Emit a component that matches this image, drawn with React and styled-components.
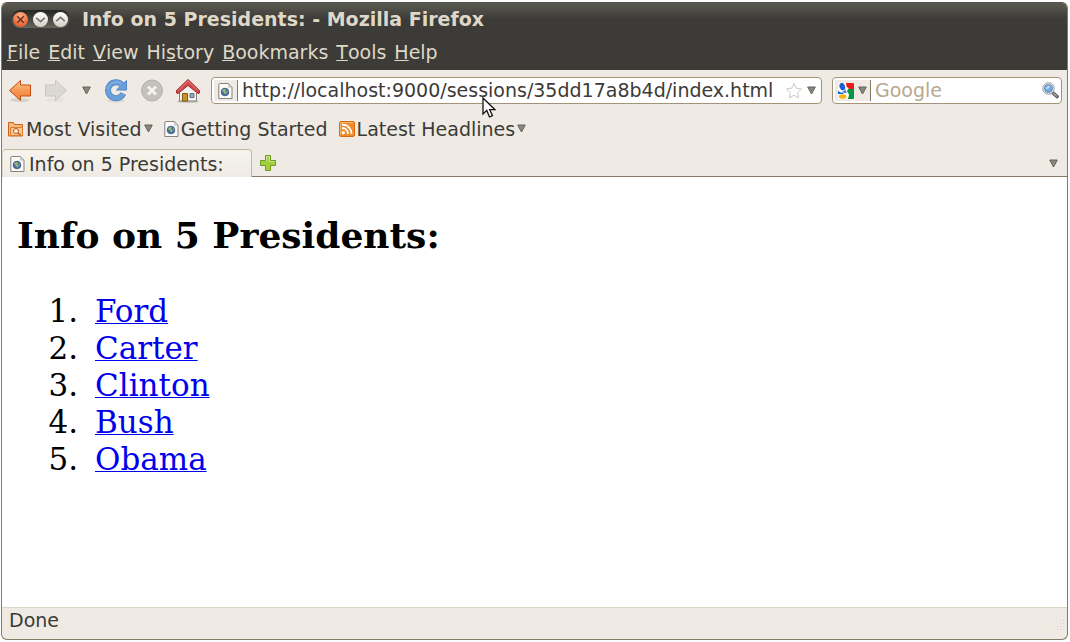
import React from "react";
import styled, { createGlobalStyle } from "styled-components";

const GlobalStyle = createGlobalStyle`
  * { box-sizing: border-box; }
  body { margin: 0; background: #fff; }
  button, input { font: inherit; color: inherit; border: 0; padding: 0; margin: 0; background: none; }
  button { display: flex; align-items: center; white-space: nowrap; }
  svg { display: block; flex: none; }
`;

const Desktop = styled.div`
  display: flex;
  min-height: 100vh;
  padding: 2px 2px 2px 1px;
`;

const Window = styled.div`
  position: relative;
  display: flex;
  flex-direction: column;
  flex: 1;
  min-width: 0;
  border: 1px solid #857a66;
  border-top-color: #55544c;
  border-radius: 6px;
  overflow: hidden;
  background: #efebe4;
  color: #3c3b37;
  font: 19px/24px "DejaVu Sans", sans-serif;
`;

const TitleBar = styled.header`
  display: flex;
  align-items: center;
  gap: 12px;
  height: 32px;
  padding: 0 9px;
  background: linear-gradient(#5b5a52, #3c3b37 50%);
  color: #dfd8c8;
  font-weight: bold;
`;

const WindowControls = styled.div`
  display: flex;
  align-items: center;
  gap: 5px;
  height: 18px;
  padding: 0 2px;
  border-radius: 9px;
  background: linear-gradient(#252521, #66655e);
`;

const ControlButton = styled.button`
  width: 15px;
  height: 15px;
  border-radius: 50%;
  justify-content: center;
  background: ${(p) =>
    p.$close
      ? "radial-gradient(circle at 50% 25%, #ffae89, #f0703e 60%, #dc5528)"
      : "linear-gradient(#ffffff, #d4d0c6)"};
`;

const MenuBar = styled.nav`
  display: flex;
  gap: 8px;
  height: 35px;
  padding: 5px 5px 0;
  background: #3c3b37;
  color: #dfd8c8;
`;

const MenuItem = styled.button`
  height: 24px;
`;

const NavBar = styled.div`
  display: flex;
  align-items: center;
  gap: 10px;
  padding: 7px 5px 6px;
`;

const NavButtons = styled.div`
  display: flex;
  align-items: center;
  gap: 12px;
  padding: 0 1px;
`;

const IconButton = styled.button`
  justify-content: center;
  width: ${(p) => p.$width || 24}px;
  height: 24px;
`;

const Field = styled.div`
  display: flex;
  align-items: center;
  flex: ${(p) => (p.$width ? `0 0 ${p.$width}px` : "1")};
  min-width: 0;
  height: 27px;
  padding: 0 2px;
  border: 1px solid #a39378;
  border-radius: 4px;
  background: #fff;
`;

const FieldButton = styled.button`
  justify-content: center;
  gap: 4px;
  height: 21px;
  width: ${(p) => p.$width}px;
  border-right: 1px solid #857a66;
  background: #efebe4;
`;

const TextInput = styled.input`
  flex: 1;
  min-width: 0;
  height: 24px;
  padding: 0 4px 2px;
  outline: 0;
  &::placeholder { color: #b8a88f; opacity: 1; }
`;

const BookmarksBar = styled.nav`
  display: flex;
  align-items: center;
  gap: 11px;
  height: 37px;
  padding: 0 6px;
`;

const Bookmark = styled.button`
  gap: 2px;
`;

const TabStrip = styled.div`
  display: flex;
  align-items: stretch;
  height: 30px;
  background: linear-gradient(#857a66, #857a66) bottom / 100% 1px no-repeat;
`;

const Tab = styled.button`
  gap: 4px;
  width: 250px;
  margin-top: 2px;
  padding: 0 7px;
  border: 1px solid #c3b89c;
  border-bottom: 0;
  border-left-color: #ddd5c4;
  border-radius: 4px 4px 0 0;
  background: linear-gradient(#f7f4ee, #efebe4);
`;

const TabActions = styled.div`
  display: flex;
  align-items: center;
  justify-content: space-between;
  flex: 1;
  padding: 2px 2px 0 4px;
`;

const Page = styled.main`
  flex: 1;
  padding: 0 15px;
  background: #fff;
  color: #000;
  font: 31px/37px "DejaVu Serif", serif;
`;

const Heading = styled.h1`
  margin: 36px 0;
  font-size: 36px;
  line-height: 44px;
`;

const PresidentList = styled.ol`
  margin: 0;
  padding-left: 71px;
`;

const President = styled.li`
  padding-left: 7px;
`;

const PageLink = styled.a`
  color: #0000ee;
  text-decoration: underline 1px;
`;

const StatusBar = styled.footer`
  display: flex;
  align-items: flex-end;
  justify-content: space-between;
  height: 32px;
  padding: 0 1px 7px 7px;
  border-top: 1px solid #dcd6ca;
`;

const Pointer = styled.svg`
  position: absolute;
  left: 480px;
  top: 94px;
  pointer-events: none;
`;

const Arrow = ({ size = 9 }) => (
  <svg width={size} height={size} viewBox="0 0 9 9">
    <path d="M.7 1h7.6L4.5 8z" fill="#8a877f" stroke="#65625b" strokeWidth="1" />
  </svg>
);

const PageIcon = () => (
  <svg width="15" height="16" viewBox="0 0 15 16">
    <path d="M1.500.5h9l3.500 3.500v11.500H.8V1z" fill="#fafaf8" stroke="#85837e" />
    <path d="M10.500.7V4.200H14z" fill="#dedcd7" stroke="#aaa8a3" strokeWidth=".6" />
    <circle cx="7" cy="9" r="3.800" fill="#4972a8" stroke="#2f4d79" strokeWidth=".8" />
    <path d="M4 7.500 6 6l2 .5-1 1.800 1.800 1-1.200 2.500-1.500-2zM9 6.500l1.500 1.800-1 1.200z" fill="#9cbd69" />
  </svg>
);

const DirectionIcon = ({ forward }) => {
  const id = forward ? "fwdFill" : "backFill";
  return (
    <svg width="24" height="24" viewBox="0 0 24 24">
      <defs>
        <linearGradient id={id} x1="0" y1="0" x2="0" y2="1">
          <stop offset="0" stopColor={forward ? "#e5e2dd" : "#ffc58c"} />
          <stop offset=".5" stopColor={forward ? "#d9d6d0" : "#f49a55"} />
          <stop offset="1" stopColor={forward ? "#e3dfd8" : "#f27a2c"} />
        </linearGradient>
      </defs>
      <ellipse cx="12" cy="21" rx="10" ry="2" fill="#000" opacity={forward ? ".03" : ".1"} />
      <path
        d="M1.500 11.500 12.500 1.500V6H22.500V17H12.500V21.500z"
        transform={forward ? "matrix(-1 0 0 1 24 0)" : undefined}
        fill={`url(#${id})`}
        stroke={forward ? "#c8c4be" : "#c54a12"}
        strokeLinejoin="round"
      />
    </svg>
  );
};

const ReloadIcon = () => (
  <svg width="24" height="24" viewBox="0 0 24 24">
    <ellipse cx="12" cy="21.500" rx="9" ry="2" fill="#000" opacity=".08" />
    <path d="M18.500 6.500A8 8 0 1 0 19.300 14.500" fill="none" stroke="#4f86c5" strokeWidth="6" />
    <path d="M22.500 1.500V11H12.500z" fill="#6a9fd9" stroke="#4f86c5" strokeLinejoin="round" />
    <path d="M18.500 6.500A8 8 0 1 0 19 15" fill="none" stroke="#6a9fd9" strokeWidth="4.500" />
    <path d="M3.500 10C5 4 12 1.500 17 4" fill="none" stroke="#8fb9e6" />
  </svg>
);

const StopIcon = () => (
  <svg width="24" height="24" viewBox="0 0 24 24">
    <circle cx="12" cy="11.500" r="10.500" fill="#c4c1bc" stroke="#b4b0aa" />
    <path d="m8 7.500 8 8m0-8-8 8" stroke="#f3f1ed" strokeWidth="3" />
  </svg>
);

const HomeIcon = () => (
  <svg width="24" height="24" viewBox="0 0 24 24">
    <ellipse cx="12" cy="22.500" rx="11" ry="1.300" fill="#000" opacity=".2" />
    <path d="M3.500 11 12 3.500 20.500 11V22H3.500z" fill="#f3f2ef" stroke="#85837e" />
    <path d="M6.500 14.500h5V22h-5z" fill="#c99627" stroke="#825b13" />
    <path d="M14 14.500h4v4h-4z" fill="#8daac8" stroke="#6e7176" />
    <path d="M12 .5 23.500 11.500V14L22 14.500 12 6.500 2 14.500.5 14V11.500z" fill="#d04a4c" stroke="#a32a2c" strokeLinejoin="round" />
    <path d="m2 11.500 10-9.500L22 11.500" fill="none" stroke="#e47f7f" />
  </svg>
);

const StarIcon = () => (
  <svg width="18" height="17" viewBox="0 0 18 17">
    <path d="m9 1.300 2.300 4.900 5.200.7-3.800 3.700 1 5.200L9 13.300l-4.700 2.500 1-5.200L1.500 6.900l5.200-.7z" fill="#fff" stroke="#cbc9c6" />
  </svg>
);

const GoogleIcon = () => (
  <svg width="16" height="16" viewBox="0 0 16 16">
    <path d="M0 0h16v16H0z" fill="#fff" />
    <path d="M8 0h7a1 1 0 0 1 1 1v5H11L8.500 3.500z" fill="#ed1b1b" />
    <path d="M10 6h6v9a1 1 0 0 1-1 1H9.500c2-3 2-5-.5-7.500z" fill="#07963f" />
    <ellipse cx="4.300" cy="3.600" rx="2.700" ry="3.800" fill="#1b5fd0" transform="rotate(-20 4.300 3.600)" />
    <path d="M8 5.500 7.500 8 9 9.500 5.500 9.700 4 9C6 8.500 7 7.500 8 5.500z" fill="#1b5fd0" />
    <path d="M0 7.500C1 9 3 9.800 5.500 9.800L5 11H0z" fill="#1b5fd0" />
    <ellipse cx="4.700" cy="13.500" rx="3.800" ry="2.300" fill="#f6b51b" />
  </svg>
);

const SearchIcon = () => (
  <svg width="17" height="17" viewBox="0 0 17 17">
    <path d="m11 11 4 3.500" stroke="#5b5b58" strokeWidth="3.600" strokeLinecap="round" />
    <path d="m11 11 4 3.500" stroke="#aaa9a5" strokeWidth="1.300" />
    <circle cx="6.500" cy="6.500" r="5.700" fill="#fff" stroke="#8a8c8e" />
    <circle cx="6.500" cy="6.500" r="4" fill="#79a8dd" stroke="#5b86bb" />
    <path d="M4 7C4 4 6 3.500 8 3.800 8 6 6 7 4 7z" fill="#c5dcf5" />
  </svg>
);

const FolderIcon = () => (
  <svg width="16" height="16" viewBox="0 0 16 16">
    <path d="M.5 15V1.500h5l1 2H14.500V15z" fill="#f5ba82" stroke="#cc6418" />
    <path d="M2.500 14.500V6.500h12V14.500z" fill="#f6c697" stroke="#dc7d30" />
    <circle cx="8" cy="10" r="2.500" fill="#fff0dd" stroke="#bf5713" />
    <path d="m10 12 2.500 2" stroke="#bf5713" strokeWidth="1.500" />
  </svg>
);

const FeedIcon = () => (
  <svg width="16" height="16" viewBox="0 0 16 16">
    <rect x=".5" y=".5" width="15" height="15" rx="1.500" fill="#f28b28" stroke="#d86b10" />
    <path d="M1.500 14V1.500H14" fill="none" stroke="#f9b56f" />
    <circle cx="4.300" cy="11.700" r="1.600" fill="#fff" />
    <path d="M3 7c3.500 0 6 2.500 6 6M3 3.500c5.500 0 9.500 4 9.500 9.500" fill="none" stroke="#fff" strokeWidth="1.800" />
  </svg>
);

const PlusIcon = () => (
  <svg width="16" height="16" viewBox="0 0 16 16">
    <path d="M5.500.5h5v5h5v5h-5v5h-5v-5h-5v-5h5z" fill="#a4cf3d" stroke="#6b9a27" strokeLinejoin="round" />
    <path d="M6.500 6.500v-5h3v5h5" fill="none" stroke="#cce58a" />
  </svg>
);

const Grip = () => (
  <svg width="12" height="12" viewBox="0 0 12 12" fill="#d8d1c3">
    <path d="M9 0h1v1H9zM9 3h1v1H9zM6 3h1v1H6zM9 6h1v1H9zM6 6h1v1H6zM3 6h1v1H3zM9 9h1v1H9zM6 9h1v1H6zM3 9h1v1H3zM0 9h1v1H0z" />
  </svg>
);

const controls = [
  { label: "Close", close: true, d: "m4 4 6 6m0-6-6 6" },
  { label: "Minimize", d: "m3 5.500 4 3.500 4-3.500" },
  { label: "Maximize", d: "m3 8.500 4-3.500 4 3.500" },
];

const menus = [
  ["", "F", "ile"],
  ["", "E", "dit"],
  ["", "V", "iew"],
  ["Hi", "s", "tory"],
  ["", "B", "ookmarks"],
  ["", "T", "ools"],
  ["", "H", "elp"],
];

const presidents = ["Ford", "Carter", "Clinton", "Bush", "Obama"];

export default function App() {
  return (
    <Desktop>
      <GlobalStyle />
      <Window>
        <TitleBar>
          <WindowControls>
            {controls.map((c) => (
              <ControlButton key={c.label} $close={c.close} aria-label={c.label}>
                <svg width="15" height="15" viewBox="0 0 14 14">
                  <path d={c.d} fill="none" stroke={c.close ? "#633325" : "#77756f"} strokeWidth="1.500" />
                </svg>
              </ControlButton>
            ))}
          </WindowControls>
          <span>Info on 5 Presidents: - Mozilla Firefox</span>
        </TitleBar>
        <MenuBar>
          {menus.map(([before, key, after]) => (
            <MenuItem key={key + after}>
              {before}
              <u>{key}</u>
              {after}
            </MenuItem>
          ))}
        </MenuBar>
        <NavBar>
          <NavButtons>
            <IconButton aria-label="Back"><DirectionIcon /></IconButton>
            <IconButton aria-label="Forward"><DirectionIcon forward /></IconButton>
            <IconButton $width={12} aria-label="Recent pages"><Arrow /></IconButton>
            <IconButton aria-label="Reload"><ReloadIcon /></IconButton>
            <IconButton aria-label="Stop"><StopIcon /></IconButton>
            <IconButton aria-label="Home"><HomeIcon /></IconButton>
          </NavButtons>
          <Field>
            <FieldButton $width={24} aria-label="Site identity"><PageIcon /></FieldButton>
            <TextInput aria-label="Address" defaultValue="http://localhost:9000/sessions/35dd17a8b4d/index.html" />
            <IconButton $width={18} aria-label="Bookmark this page"><StarIcon /></IconButton>
            <IconButton $width={16} aria-label="Show history"><Arrow /></IconButton>
          </Field>
          <Field $width={230}>
            <FieldButton $width={36} aria-label="Search engine"><GoogleIcon /><Arrow /></FieldButton>
            <TextInput aria-label="Search" placeholder="Google" />
            <IconButton $width={18} aria-label="Go"><SearchIcon /></IconButton>
          </Field>
        </NavBar>
        <BookmarksBar>
          <Bookmark><FolderIcon />Most Visited<Arrow /></Bookmark>
          <Bookmark><PageIcon />Getting Started</Bookmark>
          <Bookmark><FeedIcon />Latest Headlines<Arrow /></Bookmark>
        </BookmarksBar>
        <TabStrip>
          <Tab><PageIcon />Info on 5 Presidents:</Tab>
          <TabActions>
            <IconButton aria-label="New tab"><PlusIcon /></IconButton>
            <IconButton aria-label="List all tabs"><Arrow /></IconButton>
          </TabActions>
        </TabStrip>
        <Page>
          <Heading>Info on 5 Presidents:</Heading>
          <PresidentList>
            {presidents.map((name) => (
              <President key={name}><PageLink href={`#${name}`}>{name}</PageLink></President>
            ))}
          </PresidentList>
        </Page>
        <StatusBar>
          <span>Done</span>
          <Grip />
        </StatusBar>
        <Pointer width="14" height="22" viewBox="0 0 14 22">
          <path d="M1 1v16l3.800-3.600L7.500 20l3-1.300-2.800-6H13z" fill="#fff" stroke="#111" strokeWidth="1.300" />
        </Pointer>
      </Window>
    </Desktop>
  );
}
